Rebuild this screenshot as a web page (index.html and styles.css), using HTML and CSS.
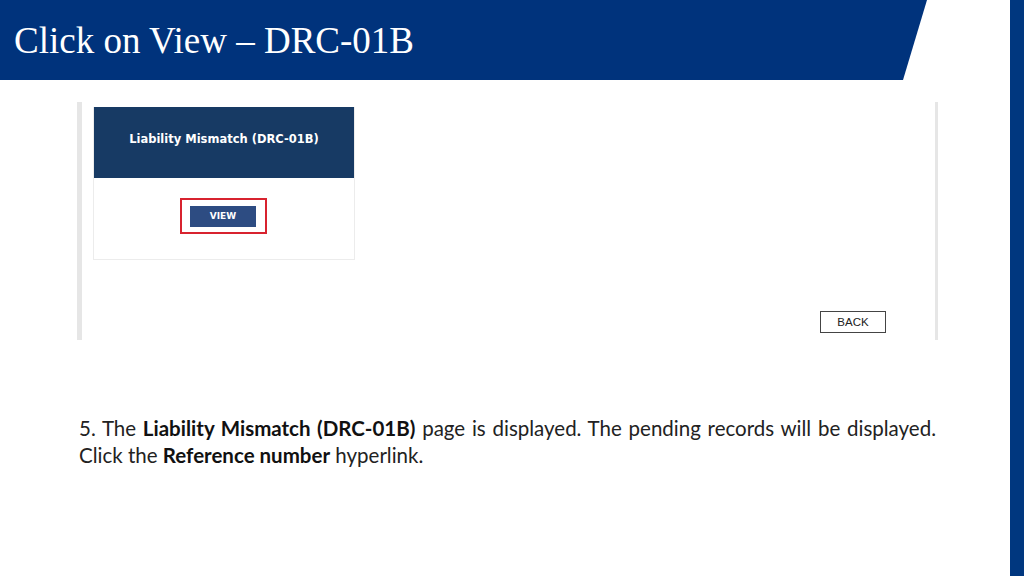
FILE: index.html
```html
<!DOCTYPE html>
<html>
<head>
  <link rel="stylesheet" href="styles.css">
</head>
<body>
  <div class="slide">
    <div class="slide-main">
      <div class="title-bar">
        <h1 class="title">Click on View &ndash; DRC-01B</h1>
      </div>

      <div class="shot">
        <div class="card">
          <div class="card-head">Liability Mismatch (DRC-01B)</div>
          <div class="card-body">
            <div class="highlight">
              <div class="view-button">VIEW</div>
            </div>
          </div>
        </div>
        <div class="back-row">
          <div class="back-button">BACK</div>
        </div>
      </div>

      <div class="step">
        <div class="step-line step-line-full">5. The <b>Liability Mismatch (DRC-01B)</b> page is displayed. The pending records will be displayed.</div>
        <div class="step-line">Click the <b>Reference number</b> hyperlink.</div>
      </div>
    </div>
    <div class="slide-edge"></div>
  </div>
</body>
</html>
```

FILE: styles.css
```css
body {
  margin: 0;
  background-color: #fff;
  font-family: "Liberation Sans", Arial, sans-serif;
}

.slide {
  display: flex;
  width: 1024px;
  height: 576px;
  overflow: hidden;
}

.slide-main {
  flex: 1;
  display: flex;
  flex-direction: column;
}

.slide-edge {
  width: 14px;
  background-color: #00377f;
}

.title-bar {
  width: 927px;
  height: 80px;
  background-color: #00337c;
  clip-path: polygon(0 0, 100% 0, calc(100% - 24px) 100%, 0 100%);
  display: flex;
  align-items: center;
}

.title {
  margin: 0 0 0 14px;
  color: #fff;
  font-family: "Liberation Serif", "Times New Roman", serif;
  font-weight: normal;
  font-size: 37px;
}

.shot {
  display: flex;
  flex-direction: column;
  margin: 22px 0 0 77px;
  width: 861px;
  height: 238px;
  box-sizing: border-box;
  border-left: 5px solid #e6e6e6;
  border-right: 3px solid #e6e6e6;
  padding: 5px 0 7px 11px;
}

.card {
  width: 262px;
  height: 153px;
  box-sizing: border-box;
  border: 1px solid #ececec;
  border-top: none;
  display: flex;
  flex-direction: column;
}

.card-head {
  height: 71px;
  box-sizing: border-box;
  padding-bottom: 7px;
  background-color: #173a64;
  color: #fff;
  font-family: Verdana, "DejaVu Sans", sans-serif;
  font-weight: bold;
  font-size: 11.5px;
  display: flex;
  align-items: center;
  justify-content: center;
}

.card-body {
  display: flex;
  justify-content: center;
  padding: 20px 2px 0 0;
}

.highlight {
  width: 87px;
  height: 36px;
  box-sizing: border-box;
  border: 2px solid #d8232f;
  display: flex;
  align-items: center;
  justify-content: center;
}

.view-button {
  width: 66px;
  height: 21px;
  background-color: #2d4c82;
  color: #fff;
  font-family: Verdana, "DejaVu Sans", sans-serif;
  font-weight: bold;
  font-size: 9px;
  line-height: 21px;
  text-align: center;
}

.back-row {
  margin-top: auto;
  display: flex;
  justify-content: flex-end;
  padding-right: 49px;
}

.back-button {
  width: 66px;
  height: 22px;
  box-sizing: border-box;
  border: 1px solid #444;
  color: #222;
  font-size: 11.5px;
  line-height: 20px;
  text-align: center;
}

.step {
  margin: 75px 0 0 79px;
  width: 857px;
  font-family: Lato, "Liberation Sans", sans-serif;
  font-size: 20.5px;
  line-height: 27px;
  color: #222;
}

.step-line-full {
  text-align: justify;
  text-align-last: justify;
}

.step b {
  color: #111;
}
```
